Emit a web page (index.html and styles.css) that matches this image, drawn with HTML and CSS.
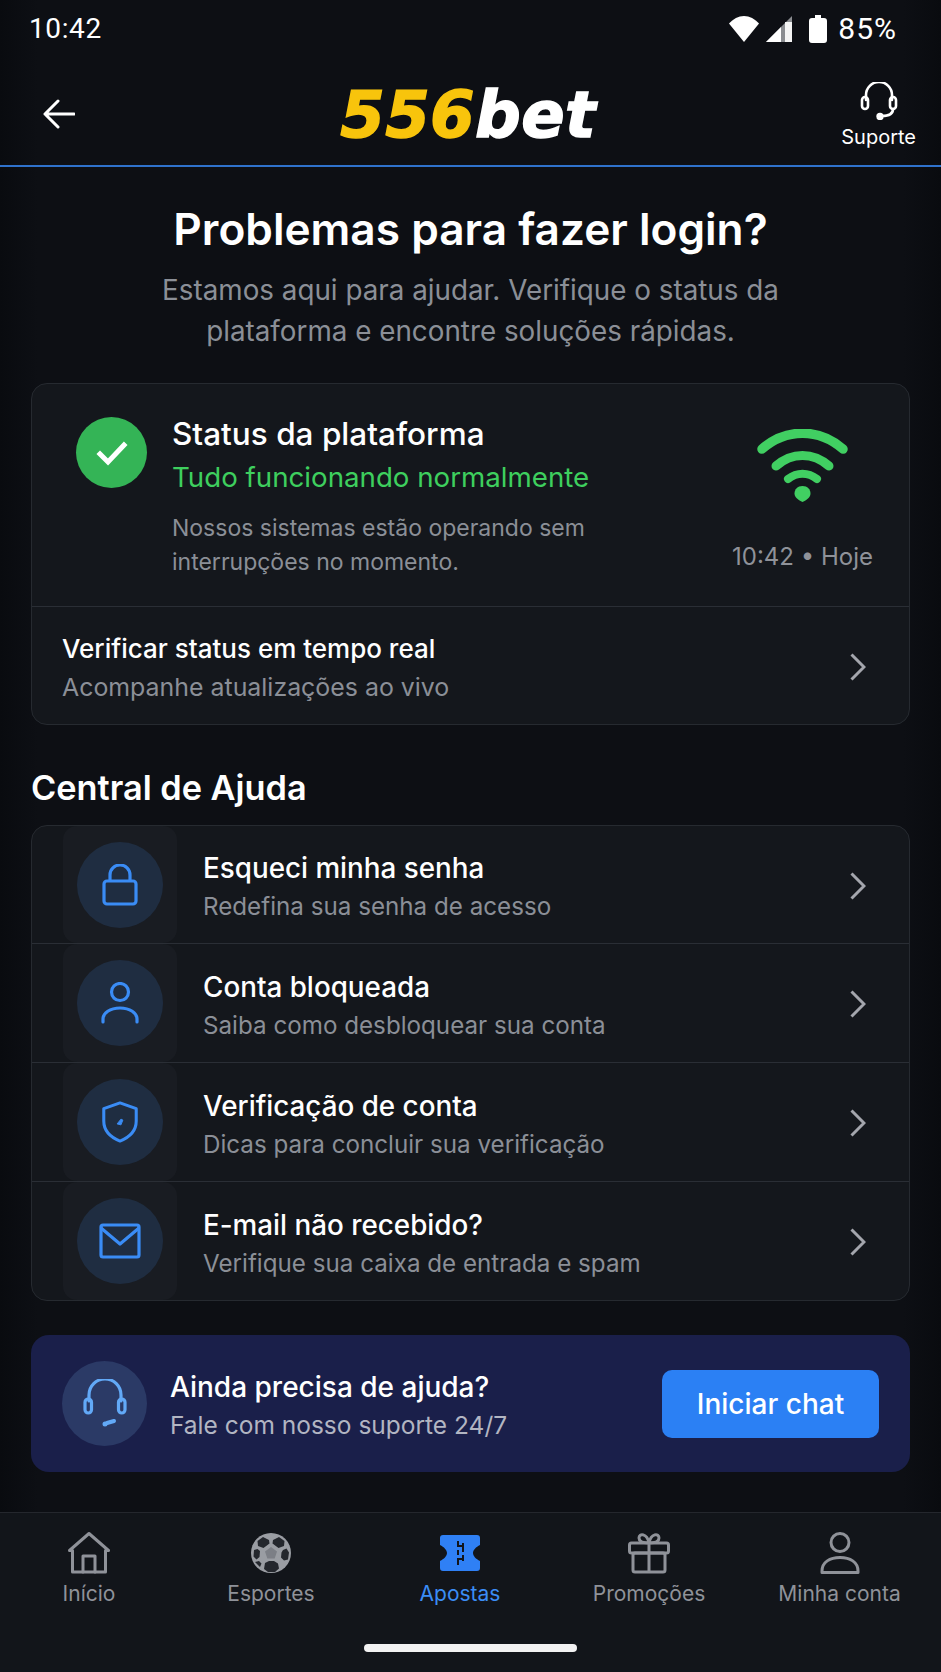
FILE: index.html
```html
<!DOCTYPE html>
<html lang="pt-BR">
<head>
<meta charset="utf-8">
<title>556bet</title>
<link rel="stylesheet" href="styles.css">
</head>
<body>
<div class="app">
  <div class="statusbar">
    <span class="clock">10:42</span>
    <div class="sys">
      <svg class="sys-wifi" viewBox="0 0 30 26"><path d="M0 7.500C4 3 9.500 0 15 0s11 3 15 7.500L15 26z" fill="#fff"/></svg>
      <svg class="sys-signal" viewBox="0 0 26 26"><path d="M26 0v26H0z" fill="#8a8c90"/><path d="M15 11v15H0z" fill="#fff"/><path d="M19 6h7v20h-7z" fill="#fff" opacity=".9"/></svg>
      <svg class="sys-batt" viewBox="0 0 18 28"><path d="M6 0h6v3h3a3 3 0 0 1 3 3v19a3 3 0 0 1-3 3H3a3 3 0 0 1-3-3V6a3 3 0 0 1 3-3h3z" fill="#fff"/></svg>
      <span class="pct">85%</span>
    </div>
  </div>
  <header class="appbar">
    <svg class="back" viewBox="0 0 32 30" fill="none" stroke="#fff" stroke-width="3" stroke-linecap="round" stroke-linejoin="round"><path d="M15 2 2 15l13 13M2 15h29"/></svg>
    <div class="logo"><span class="logo-y">556</span><span class="logo-w">bet</span></div>
    <div class="support">
      <svg class="support-ico" viewBox="0 0 40 38" fill="none" stroke="#fff" stroke-width="2.600" stroke-linecap="round"><path d="M7 18v-5a13 13 0 0 1 26 0v5"/><rect x="3" y="15" width="6" height="12" rx="3"/><rect x="31" y="15" width="6" height="12" rx="3"/><path d="M34 27c0 5-5 7-11 7"/><circle cx="21" cy="34.500" r="2.400" fill="#fff"/></svg>
      <span class="support-label">Suporte</span>
    </div>
  </header>

  <main class="content">
    <section class="intro">
      <h1 class="intro-title">Problemas para fazer login?</h1>
      <p class="intro-sub">Estamos aqui para ajudar. Verifique o status da<br>plataforma e encontre soluções rápidas.</p>
    </section>

    <section class="card">
      <div class="status">
        <div class="status-check">
          <svg viewBox="0 0 32 26" fill="none" stroke="#fff" stroke-width="5" stroke-linecap="square"><path d="M4 14l8 8L28 5"/></svg>
        </div>
        <div class="status-text">
          <div class="status-title">Status da plataforma</div>
          <div class="status-ok">Tudo funcionando normalmente</div>
          <p class="status-desc">Nossos sistemas estão operando sem<br>interrupções no momento.</p>
        </div>
        <div class="status-side">
          <svg class="status-wifi" viewBox="0 0 91 73" fill="none" stroke="#41cf62" stroke-linecap="round"><path d="M5 20C29-1 62-1 86 20" stroke-width="9.500"/><path d="M19 37C35 23 56 23 72 37" stroke-width="9"/><path d="M31 50C40 43 51 43 60 50" stroke-width="8"/><path d="M45.500 57c-5 0-8 3.500-8 7.500s4 6.500 8 8.500c4-2 8-4.500 8-8.500s-3-7.500-8-7.500z" fill="#41cf62" stroke="none"/></svg>
          <div class="status-time">10:42 • Hoje</div>
        </div>
      </div>
      <div class="verify">
        <div>
          <div class="row-title">Verificar status em tempo real</div>
          <div class="row-sub">Acompanhe atualizações ao vivo</div>
        </div>
        <svg class="chev" viewBox="0 0 16 28" fill="none" stroke="#a4a6ad" stroke-width="3"><path d="M1.500 1.500 14 14 1.500 26.500"/></svg>
      </div>
    </section>

    <h2 class="section-title">Central de Ajuda</h2>

    <section class="card help">
      <div class="help-row">
        <div class="tile"><div class="tile-circle">
          <svg class="help-ico" viewBox="0 0 36 42" fill="none" stroke="#3a8cf5" stroke-width="3.200" stroke-linejoin="round"><path d="M8 17V11a10 10 0 0 1 20 0v6"/><rect x="2" y="17" width="32" height="23" rx="3"/></svg>
        </div></div>
        <div class="help-text"><div class="row-title">Esqueci minha senha</div><div class="row-sub">Redefina sua senha de acesso</div></div>
        <svg class="chev" viewBox="0 0 16 28" fill="none" stroke="#a4a6ad" stroke-width="3"><path d="M1.500 1.500 14 14 1.500 26.500"/></svg>
      </div>
      <div class="help-row">
        <div class="tile"><div class="tile-circle">
          <svg class="help-ico" viewBox="0 0 38 42" fill="none" stroke="#3a8cf5" stroke-width="3.200" stroke-linecap="round"><circle cx="19" cy="10" r="8.500"/><path d="M2 40v-3c0-6 7-11 17-11s17 5 17 11v3"/></svg>
        </div></div>
        <div class="help-text"><div class="row-title">Conta bloqueada</div><div class="row-sub">Saiba como desbloquear sua conta</div></div>
        <svg class="chev" viewBox="0 0 16 28" fill="none" stroke="#a4a6ad" stroke-width="3"><path d="M1.500 1.500 14 14 1.500 26.500"/></svg>
      </div>
      <div class="help-row">
        <div class="tile"><div class="tile-circle">
          <svg class="help-ico" viewBox="0 0 38 44" fill="none" stroke="#3a8cf5" stroke-width="3.200" stroke-linejoin="round"><path d="M19 2 36 8v13c0 10-7 17-17 21C9 38 2 31 2 21V8z"/><path d="M16 24l4-5 2 1-2 5z" fill="#3a8cf5" stroke-width="1"/></svg>
        </div></div>
        <div class="help-text"><div class="row-title">Verificação de conta</div><div class="row-sub">Dicas para concluir sua verificação</div></div>
        <svg class="chev" viewBox="0 0 16 28" fill="none" stroke="#a4a6ad" stroke-width="3"><path d="M1.500 1.500 14 14 1.500 26.500"/></svg>
      </div>
      <div class="help-row">
        <div class="tile"><div class="tile-circle">
          <svg class="help-ico-wide" viewBox="0 0 42 36" fill="none" stroke="#3a8cf5" stroke-width="3.200" stroke-linejoin="round"><rect x="2" y="2" width="38" height="32" rx="2"/><path d="M2 5l19 16L40 5"/></svg>
        </div></div>
        <div class="help-text"><div class="row-title">E-mail não recebido?</div><div class="row-sub">Verifique sua caixa de entrada e spam</div></div>
        <svg class="chev" viewBox="0 0 16 28" fill="none" stroke="#a4a6ad" stroke-width="3"><path d="M1.500 1.500 14 14 1.500 26.500"/></svg>
      </div>
    </section>

    <section class="banner">
      <div class="banner-circle">
        <svg class="banner-ico" viewBox="0 0 44 50" fill="none" stroke="#62a9f7" stroke-width="3.200" stroke-linecap="round"><path d="M6 22v-6a16 16 0 0 1 32 0v6"/><rect x="2" y="20" width="6.500" height="14" rx="3.200"/><rect x="35.500" y="20" width="6.500" height="14" rx="3.200"/><path d="M24 44l7-2" stroke-width="4"/><circle cx="22" cy="45" r="2.500" fill="#62a9f7" stroke="none"/></svg>
      </div>
      <div class="banner-text">
        <div class="banner-title">Ainda precisa de ajuda?</div>
        <div class="banner-sub">Fale com nosso suporte 24/7</div>
      </div>
      <button class="chat-btn">Iniciar chat</button>
    </section>
  </main>

  <nav class="tabbar">
    <div class="tabs">
      <div class="tab">
        <svg class="tab-ico" viewBox="0 0 42 42" fill="none" stroke="#8f9299" stroke-width="3" stroke-linejoin="round" stroke-linecap="round"><path d="M1.500 18.500 21 1.500l19.500 17h-3V40h-33V18.500z"/><path d="M15 40V24h12v16"/></svg>
        <span class="tab-label">Início</span>
      </div>
      <div class="tab">
        <svg class="tab-ico" viewBox="0 0 42 42"><circle cx="21" cy="21" r="20" fill="#9a9da3"/><path d="M21 15l6 4.500-2.300 7h-7.400l-2.300-7z" fill="#7c7f86"/><path d="M13 5l6 3 .5 3.500-6 4.500-5.500-2L7.500 9zM29 5l-6 3-.5 3.500 6 4.500 5.500-2 .5-5zM4 18l3.500-1 2.500 2-.5 6-3 2.500-3-3zM33 18l3.500-1.500 2.500 4-1 7-4 1-3-3 .5-5zM15 31l4-2h5l4 2.500 1 5-4 3.500h-7l-4-3zM5 30l4-1 2.500 2.500L10 35z" fill="#24272d"/></svg>
        <span class="tab-label">Esportes</span>
      </div>
      <div class="tab tab-on">
        <svg class="tab-ico" viewBox="0 0 42 42"><path d="M4 3h34a3 3 0 0 1 3 3v7c-4 2-7 5-7 8s3 6 7 8v7a3 3 0 0 1-3 3H4a3 3 0 0 1-3-3v-7c4-2 7-5 7-8s-3-6-7-8V6a3 3 0 0 1 3-3z" fill="#2f80f5"/><path d="M18 9h2v6h-2zM18 18h2v5h-2zM18 26h2v7h-2zM23 11h2v9h-2zM23 23h2v6h-2zM20 13h3v2h-3zM20 26h3v2h-3z" fill="#12151b"/></svg>
        <span class="tab-label">Apostas</span>
      </div>
      <div class="tab">
        <svg class="tab-ico" viewBox="0 0 42 42" fill="none" stroke="#8f9299" stroke-width="3" stroke-linejoin="round"><rect x="1.500" y="11" width="39" height="10" rx="2"/><rect x="5" y="21" width="32" height="19" rx="2"/><path d="M21 11v29M21 11c-4 0-10-1-10-5 0-5 8-5 10 5zM21 11c4 0 10-1 10-5 0-5-8-5-10 5z"/></svg>
        <span class="tab-label">Promoções</span>
      </div>
      <div class="tab">
        <svg class="tab-ico" viewBox="0 0 40 42" fill="none" stroke="#8f9299" stroke-width="3" stroke-linejoin="round"><circle cx="20" cy="10.500" r="9"/><path d="M2 39c0-9 8-13.500 18-13.500S38 30 38 39v1.500H2z"/></svg>
        <span class="tab-label">Minha conta</span>
      </div>
    </div>
    <div class="home-bar"></div>
  </nav>
</div>
</body>
</html>
```
FILE: styles.css
```css
* { box-sizing: border-box; }
html, body { margin: 0; padding: 0; background: #0c0e13; }
body { font-family: Inter, "Noto Sans", "Liberation Sans", sans-serif; color: #fff; }
.app { width: 941px; height: 1672px; display: flex; flex-direction: column; overflow: hidden; background: linear-gradient(90deg, #090b0f 0, #0d0f14 4%, #0d0f14 96%, #090b0f 100%); }

.statusbar { height: 58px; padding: 0 44px 0 29px; display: flex; align-items: center; justify-content: space-between; }
.clock { font: 400 28px/1 Roboto, sans-serif; letter-spacing: .6px; }
.sys { display: flex; align-items: center; }
.sys-wifi { width: 30px; height: 26px; margin-right: 7px; }
.sys-signal { width: 26px; height: 26px; margin-right: 17px; }
.sys-batt { width: 18px; height: 28px; margin-right: 11px; }
.pct { font: 400 30px/1 Roboto, sans-serif; letter-spacing: 1px; }

.appbar { height: 109px; border-bottom: 2px solid #2f72cc; padding: 0 25px 0 43px; display: flex; align-items: center; justify-content: space-between; }
.back { width: 32px; height: 30px; margin-top: 4px; }
.logo { font: italic 700 64px/1 "DejaVu Sans", sans-serif; letter-spacing: .4px; margin-left: 20px; margin-top: 6px; -webkit-text-stroke: 1.500px currentColor; }
.logo-y { color: #f8c40c; }
.logo-w { color: #fff; }
.support { display: flex; flex-direction: column; align-items: center; margin-top: 10px; }
.support-ico { width: 40px; height: 38px; }
.support-label { font-size: 20px; line-height: 28px; margin-top: 3px; }

.content { flex: 1; padding: 0 31px; }
.intro { text-align: center; padding-top: 38px; }
.intro-title { margin: 0; font-size: 44.200px; line-height: 48px; font-weight: 600; }
.intro-sub { margin: 17px 0 0; font-size: 27.800px; line-height: 41px; color: #8b8f97; }

.card { margin-top: 31px; background: #14171c; border: 1px solid #262a30; border-radius: 16px; }
.status { display: flex; padding: 30px 36px 27px 44px; border-bottom: 1px solid #2a2e35; }
.status-check { width: 71px; height: 71px; margin-top: 3px; border-radius: 50%; background: #34b456; display: flex; align-items: center; justify-content: center; flex: none; }
.status-check svg { width: 32px; height: 26px; }
.status-text { margin-left: 25px; flex: 1; }
.status-title { font-size: 31.500px; line-height: 40px; font-weight: 500; }
.status-ok { margin-top: 3px; font-size: 27.700px; line-height: 40px; color: #3ecf5e; }
.status-desc { margin: 14px 0 0; font-size: 23px; line-height: 34px; color: #8b8f97; }
.status-side { display: flex; flex-direction: column; align-items: center; margin-top: 15px; }
.status-wifi { width: 91px; height: 73px; }
.status-time { margin-top: 38px; font-size: 24px; line-height: 34px; color: #8f9299; }

.verify { display: flex; align-items: center; justify-content: space-between; padding: 24px 43px 19px 30px; }
.verify .chev { margin-bottom: 3px; }
.row-title { font-size: 26px; line-height: 36px; font-weight: 500; }
.row-sub { margin-top: 2px; font-size: 24.900px; line-height: 36px; color: #8b8f97; }
.chev { width: 16px; height: 28px; flex: none; }

.section-title { margin: 43px 0 0; font-size: 34.300px; line-height: 40px; font-weight: 600; }

.help { margin-top: 17px; }
.help-row { height: 119px; display: flex; align-items: center; padding: 0 43px 0 31px; border-bottom: 1px solid #2a2e35; }
.help-row:first-child { height: 118px; }
.help-row:last-child { height: 118px; border-bottom: 0; }
.help-row .chev { margin-top: 2px; }
.help-row .row-title { font-size: 27.800px; }
.help-row .row-sub { margin-top: 3px; font-size: 24.200px; }
.tile { width: 114px; height: 100%; background: #191c22; border-radius: 14px; display: flex; align-items: center; justify-content: center; flex: none; }
.tile-circle { width: 86px; height: 86px; border-radius: 50%; background: #1f2d41; display: flex; align-items: center; justify-content: center; }
.help-ico { width: 38px; height: 42px; }
.help-ico-wide { width: 42px; height: 36px; }
.help-text { flex: 1; margin-left: 26px; padding-top: 6px; }

.banner { margin-top: 34px; height: 137px; padding: 0 31px; background: #1a1f4a; border-radius: 18px; display: flex; align-items: center; }
.banner-circle { width: 85px; height: 85px; border-radius: 50%; background: #2b3a66; display: flex; align-items: center; justify-content: center; flex: none; }
.banner-ico { width: 44px; height: 50px; }
.banner-text { flex: 1; margin-left: 23px; padding-top: 5px; }
.banner-title { font-size: 28px; line-height: 36px; font-weight: 500; }
.banner-sub { margin-top: 2px; font-size: 24.500px; line-height: 36px; color: #b2b5c2; }
.chat-btn { width: 217px; height: 68px; border: 0; border-radius: 10px; background: #2b80f4; color: #fff; font: 500 28px/1 Inter, sans-serif; }

.tabbar { height: 160px; background: #12151a; border-top: 1px solid #24272d; padding-top: 19px; }
.tabs { display: grid; grid-template-columns: 178px 186px 192px 186px 195px; }
.tab { display: flex; flex-direction: column; align-items: center; }
.tab-ico { width: 42px; height: 42px; }
.tab-label { margin-top: 6px; font-size: 21px; line-height: 28px; color: #8f9299; white-space: nowrap; }
.tab-on .tab-label { color: #3b8df5; }
.home-bar { width: 213px; height: 8px; margin: 36px auto 0; border-radius: 4px; background: #f2f2f2; }
```
